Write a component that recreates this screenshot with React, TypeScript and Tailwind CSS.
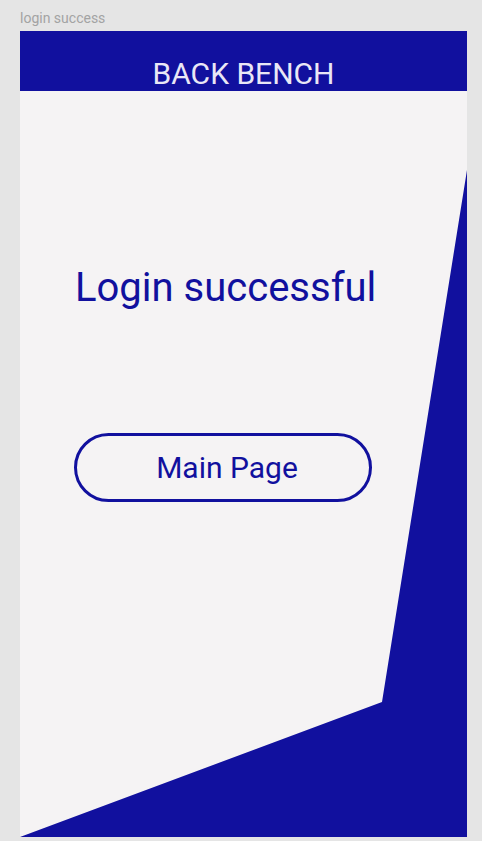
const BLUE = "#11109e";

function App() {
  return (
    <div className="min-h-screen w-full bg-[#e5e5e5] pl-[20px] pt-[10px] font-['Roboto',sans-serif]">
      <div className="h-[21px] text-[14px] leading-[17px] text-[#a3a3a3]">login success</div>

      <div className="relative h-[806px] w-[447px] overflow-hidden bg-[#f5f3f4]">
        {/* background wedge */}
        <svg
          className="absolute inset-0"
          width="447"
          height="806"
          viewBox="0 0 447 806"
        >
          <polygon points="447,139 362,671 0,806 447,806" fill={BLUE} />
        </svg>

        <div className="relative flex flex-col">
          <div className="flex h-[60px] items-end justify-center bg-[#11109e]">
            <span className="text-[30px] leading-[34px] text-[#e9e7f6]">BACK BENCH</span>
          </div>

          <div className="mt-[173px] pl-[55px] text-[40px] leading-[48px] text-[#11109e]">
            Login successful
          </div>

          <div className="mt-[121px] pl-[54px]">
            <button className="flex h-[69px] w-[298px] items-center justify-center rounded-full border-[3px] border-[#11109e] pl-[8px] text-[30px] text-[#11109e]">
              Main Page
            </button>
          </div>
        </div>
      </div>
    </div>
  );
}

export default App;
